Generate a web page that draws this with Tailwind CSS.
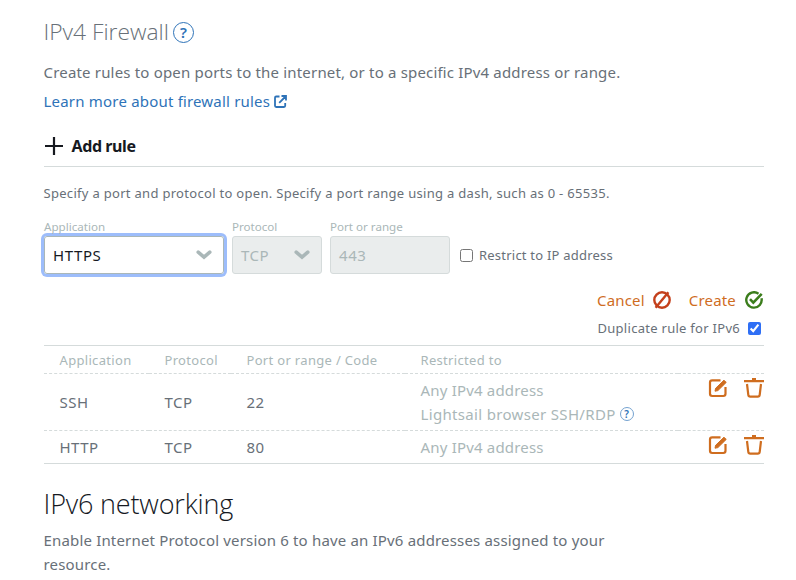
<!DOCTYPE html>
<html lang="en">
<head>
<meta charset="utf-8">
<title>IPv4 Firewall</title>
<script src="https://cdn.jsdelivr.net/npm/@tailwindcss/browser@4"></script>
</head>
<body class="h-[580px] overflow-hidden bg-white font-['Noto_Sans',sans-serif] text-[15px] leading-6 tracking-[0.18px] text-[#687078] [font-feature-settings:'liga'_1]">
<svg class="hidden">
  <symbol id="edit" viewBox="0 0 20 20"><path d="M12.5 2.3H4.2Q2 2.3 2 4.5V15.8Q2 18 4.2 18H15.3Q17.5 18 17.5 15.8V9" fill="none" stroke="currentColor" stroke-width="2.2"/><path d="M7 13.2L7.6 10.3L16 2.2L18.2 4.4L9.9 12.6Z" fill="currentColor" stroke="currentColor" stroke-width="1"/></symbol>
  <symbol id="trash" viewBox="0 0 20 20"><path d="M0 3.1H20M8 1.1H12" fill="none" stroke="currentColor" stroke-width="2.1"/><path d="M3 6L4.3 16.8Q4.5 18.6 6.2 18.6H13.8Q15.5 18.6 15.7 16.8L17 6" fill="none" stroke="currentColor" stroke-width="2.2"/></symbol>
  <symbol id="chevron" viewBox="0 0 16 10"><path d="M2.2 2.2L8 7.2L13.8 2.2" fill="none" stroke="currentColor" stroke-width="3.5" stroke-linecap="round"/></symbol>
</svg>
<main class="ml-[43.5px] w-[720.5px] pt-[14px]">
  <h2 class="flex h-9 items-center font-['Open_Sans',sans-serif] text-[22.8px] font-light tracking-normal">IPv4 Firewall
    <span class="ml-1 flex size-[21px] items-center justify-center rounded-full border border-[#2e73b8] font-['Noto_Sans',sans-serif] text-[15px] font-semibold leading-none text-[#2e73b8]">?</span>
  </h2>
  <p class="mt-[10px] whitespace-nowrap">Create rules to open ports to the internet, or to a specific IPv4 address or range.</p>
  <a class="mt-[5px] flex items-center tracking-[0.2px] text-[#2e73b8]">Learn more about firewall rules
    <svg class="ml-1 size-[13px]" viewBox="0 0 13 13" fill="none" stroke="currentColor" stroke-width="1.8"><path d="M5.5 1.5H2.2Q1 1.5 1 2.7V10.8Q1 12 2.2 12H10Q11.2 12 11.2 10.8V8M7.5 1H12V5.5M12 1L5.2 7.8"/></svg>
  </a>
  <div class="mt-[21px] flex h-[33px] items-start border-b border-[#d5dbdb] text-[16px] leading-6 font-bold tracking-[-0.4px] text-[#16191f]">
    <svg class="mt-[3px] mr-[9px] ml-[1px] size-[18px]" viewBox="0 0 18 18" stroke="currentColor" stroke-width="2.2"><path d="M9 0V18M0 9H18"/></svg>Add rule
  </div>
  <p class="mt-4 text-[13px] leading-5 tracking-[0.3px]">Specify a port and protocol to open. Specify a port range using a dash, such as 0 - 65535.</p>
  <div class="mt-[15px] ml-[0.5px] flex items-end gap-2">
    <div class="w-[180px]">
      <div class="h-[18px] text-[11.6px] leading-[17px] tracking-normal text-[#aab7b8]">Application</div>
      <div class="flex h-[38px] items-center justify-between rounded-[3px] border border-[#aab7b8] pr-[11px] pl-2 tracking-[0.6px] text-[#16191f] ring-3 ring-[#9dbdfb]">HTTPS<svg class="h-[10px] w-4 text-[#aab7b8]"><use href="#chevron"/></svg></div>
    </div>
    <div class="w-[90px]">
      <div class="h-[18px] text-[11.6px] leading-[17px] tracking-normal text-[#aab7b8]">Protocol</div>
      <div class="flex h-[38px] items-center justify-between rounded-[3px] border border-[#d5dbdb] bg-[#eaeded] pr-[11px] pl-2 tracking-[0.5px] text-[#aab7b8]">TCP<svg class="h-[10px] w-4"><use href="#chevron"/></svg></div>
    </div>
    <div class="w-[120px]">
      <div class="h-[18px] text-[11.6px] leading-[17px] tracking-normal text-[#aab7b8]">Port or range</div>
      <div class="flex h-[38px] items-center rounded-[3px] border border-[#d5dbdb] bg-[#eaeded] pl-2 tracking-[0.6px] text-[#aab7b8]">443</div>
    </div>
    <label class="ml-[2px] flex h-[38px] items-center gap-[6px] text-[13px] tracking-[0.22px]"><input type="checkbox" class="size-[13px]">Restrict to IP address</label>
  </div>
  <div class="mt-[14px] flex items-center justify-end pr-[1px] text-[#cf6d1f]">
    <span>Cancel</span>
    <svg class="ml-2 size-[18px] text-[#c4401c]" viewBox="0 0 18 18" fill="none" stroke="currentColor" stroke-width="2.4"><circle cx="9" cy="9" r="7.7"/><path d="M15.4 1.3L2.6 16.7"/></svg>
    <span class="ml-[18px]">Create</span>
    <svg class="ml-[9px] size-[18px] text-[#3b7d1c]" viewBox="0 0 18 18" fill="none" stroke="currentColor" stroke-width="2.4"><path d="M13.5 2.7A7.7 7.7 0 1 0 16.5 7.3"/><path d="M5 8.2L8.3 11.6L16.7 2.8" stroke-width="2.6"/></svg>
  </div>
  <label class="mt-[6px] flex h-5 items-center justify-end gap-2 pr-[3px] text-[13px] tracking-[0.28px]">Duplicate rule for IPv6<input type="checkbox" checked class="size-[13px] accent-[#2f6ff5]"></label>
  <div class="mt-[7px] grid grid-cols-[105.5px_82px_174px_273px_86px] border-y border-[#d5dbdb] *:border-dashed *:border-[#d5dbdb]">
    <div class="h-7 border-b pl-4 text-[13px] leading-7 tracking-[0.32px] text-[#aab7b8]">Application</div>
    <div class="h-7 border-b pl-[15.5px] text-[13px] leading-7 tracking-[0.32px] text-[#aab7b8]">Protocol</div>
    <div class="h-7 border-b pl-[15.5px] text-[13px] leading-7 tracking-[0.32px] text-[#aab7b8]">Port or range / Code</div>
    <div class="h-7 border-b pl-[15.5px] text-[13px] leading-7 tracking-[0.32px] text-[#aab7b8]">Restricted to</div>
    <div class="h-7 border-b"></div>
    <div class="flex h-[57px] items-center border-b pl-4 tracking-[0.5px]">SSH</div>
    <div class="flex h-[57px] items-center border-b pl-[15.5px] tracking-[0.5px]">TCP</div>
    <div class="flex h-[57px] items-center border-b pl-[15.5px] tracking-[0.5px]">22</div>
    <div class="h-[57px] border-b pt-1 pl-[15.5px] text-[#aab7b8]">
      <div>Any IPv4 address</div>
      <div class="flex items-center tracking-[0.33px]">Lightsail browser SSH/RDP<span class="ml-1 flex size-[14px] items-center justify-center rounded-full border border-[#74a2d0] text-[10px] font-semibold leading-none tracking-normal text-[#2e73b8]">?</span></div>
    </div>
    <div class="flex h-[57px] justify-end gap-4 border-b pt-1 text-[#cf6d1f]"><svg class="size-5"><use href="#edit"/></svg><svg class="size-5"><use href="#trash"/></svg></div>
    <div class="flex h-8 items-center pl-4 tracking-[0.5px]">HTTP</div>
    <div class="flex h-8 items-center pl-[15.5px] tracking-[0.5px]">TCP</div>
    <div class="flex h-8 items-center pl-[15.5px] tracking-[0.5px]">80</div>
    <div class="flex h-8 items-center pl-[15.5px] text-[#aab7b8]">Any IPv4 address</div>
    <div class="flex h-8 justify-end gap-4 pt-1 text-[#cf6d1f]"><svg class="size-5"><use href="#edit"/></svg><svg class="size-5"><use href="#trash"/></svg></div>
  </div>
  <h2 class="mt-5 h-10 font-['Open_Sans',sans-serif] text-[27px] leading-10 font-light tracking-[-0.17px] text-[#16191f]">IPv6 networking</h2>
  <p class="mt-1 tracking-[0.17px]">Enable Internet Protocol version 6 to have an IPv6 addresses assigned to your<br>resource.</p>
</main>
</body>
</html>
